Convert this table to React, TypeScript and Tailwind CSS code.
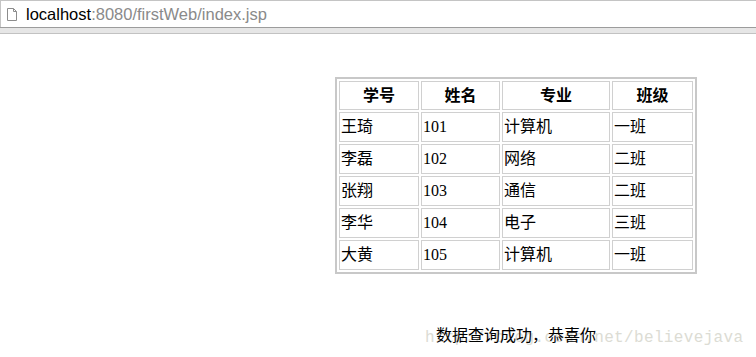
const ROWS = [
  ['王琦', '101', '计算机', '一班'],
  ['李磊', '102', '网络', '二班'],
  ['张翔', '103', '通信', '二班'],
  ['李华', '104', '电子', '三班'],
  ['大黄', '105', '计算机', '一班'],
];

const HEADERS = ['学号', '姓名', '专业', '班级'];

function PageIcon() {
  return (
    <svg width="10" height="13" viewBox="0 0 10 13" className="shrink-0">
      <path d="M0.5 0.5 H6.5 L9.5 3.5 V12.5 H0.5 Z" fill="#fff" stroke="#8c8c8c" />
      <path d="M6.5 0.5 V3.5 H9.5" fill="none" stroke="#8c8c8c" />
    </svg>
  );
}

export default function App() {
  return (
    <div className="relative w-[756px] h-[357px] bg-white overflow-hidden font-['Liberation_Serif','Noto_Sans_CJK_SC',serif] text-black">
      {/* Address bar */}
      <div className="h-[27px] border-t border-l border-[#c4c4c4] flex items-center gap-[9px] pl-[6px]">
        <PageIcon />
        <span className="font-['Liberation_Sans',sans-serif] text-[16.5px] leading-none">
          localhost<span className="text-[#8a8a8a]">:8080/firstWeb/index.jsp</span>
        </span>
      </div>
      <div className="h-px bg-[#9c9c9c]" />
      <div className="h-[5px] bg-[#e6e6e6]" />
      <div className="h-px bg-[#c2c2c2]" />

      {/* Content */}
      <div className="ml-[335px] mt-[43px] w-[362px] flex flex-col items-center">
        <div className="border-2 border-[#c8c8c8] p-[2px] grid grid-cols-[80px_79px_108px_81px] grid-rows-[29px_repeat(5,30px)] gap-[2px]">
          {HEADERS.map((h) => (
            <div key={h} className="border border-[#d0d0d0] flex items-center justify-center font-bold text-[16px]">
              {h}
            </div>
          ))}
          {ROWS.map((row) =>
            row.map((cell, i) => (
              <div key={row[0] + i} className="border border-[#d0d0d0] flex items-center pl-px text-[16px]">
                {cell}
              </div>
            ))
          )}
        </div>

        <div className="mt-[51px] relative z-10 text-[16px] leading-[22px]">数据查询成功，恭喜你</div>
      </div>

      {/* Watermark */}
      <div className="absolute left-[425px] top-[327px] leading-[22px] text-[16px] tracking-[0.35px] text-[#dcdcd4] font-['Liberation_Mono',monospace]">
        http://blog.csdn.net/believejava
      </div>
    </div>
  );
}
